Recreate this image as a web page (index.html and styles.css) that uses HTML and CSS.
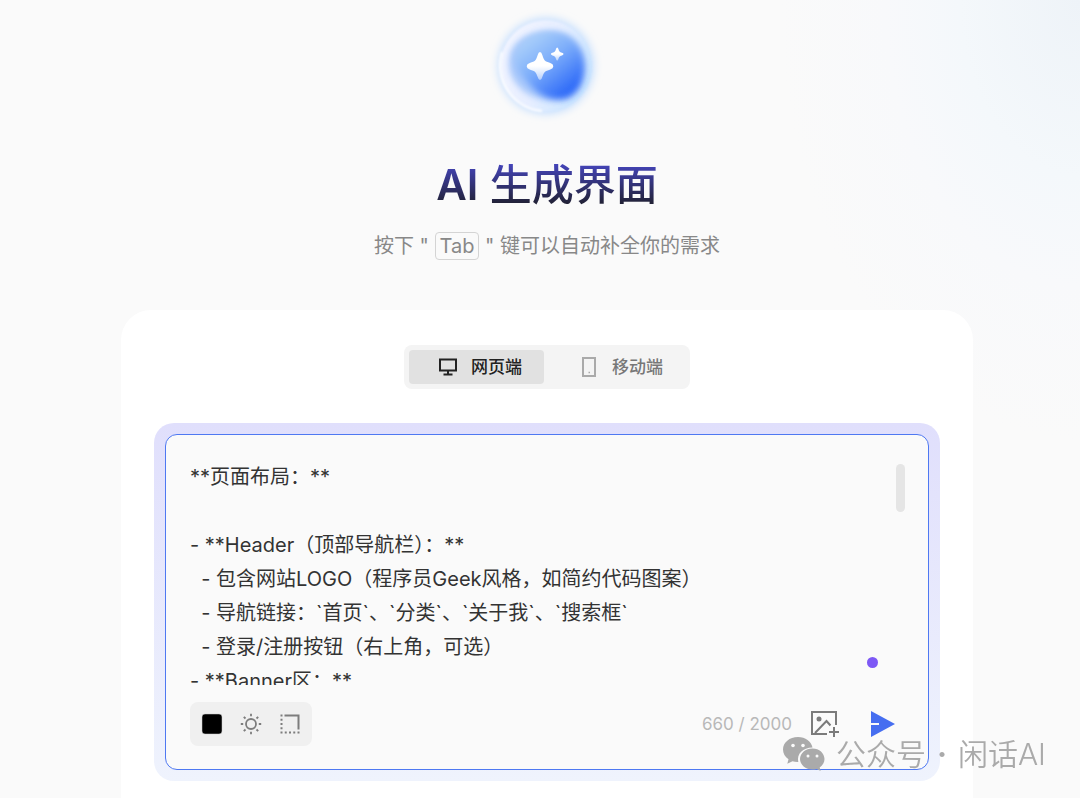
FILE: index.html
```html
<!DOCTYPE html>
<html lang="zh-CN">
<head>
    <meta charset="UTF-8">
    <meta name="viewport" content="width=device-width, initial-scale=1.0">
    <title>AI 生成界面</title>
    <link rel="stylesheet" href="styles.css">
</head>
<body>

<main class="page">
    <header class="hero">
        <svg class="orb" width="130" height="130" viewBox="0 0 130 130" aria-hidden="true">
            <defs>
                <linearGradient id="shell" x1="0" y1="0.3" x2="1" y2="0.7">
                    <stop offset="0" stop-color="#f3f5ff"/>
                    <stop offset="0.5" stop-color="#e6eeff"/>
                    <stop offset="1" stop-color="#c5e3ff"/>
                </linearGradient>
                <linearGradient id="core" x1="0.15" y1="0.15" x2="0.75" y2="0.9">
                    <stop offset="0" stop-color="#a8cefa"/>
                    <stop offset="0.45" stop-color="#7cadfa"/>
                    <stop offset="1" stop-color="#2f6bf8"/>
                </linearGradient>
                <linearGradient id="star" x1="0" y1="0" x2="0" y2="1">
                    <stop offset="0.5" stop-color="#fff"/>
                    <stop offset="1" stop-color="#fff" stop-opacity="0.5"/>
                </linearGradient>
                <filter id="glow" x="-30%" y="-30%" width="160%" height="160%">
                    <feGaussianBlur stdDeviation="4"/>
                </filter>
                <filter id="soft" x="-30%" y="-30%" width="160%" height="160%">
                    <feGaussianBlur stdDeviation="3"/>
                </filter>
                <filter id="edge" x="-30%" y="-30%" width="160%" height="160%">
                    <feGaussianBlur stdDeviation="1"/>
                </filter>
            </defs>
            <circle cx="66" cy="66" r="48" fill="#c4defe" filter="url(#glow)"/>
            <circle cx="66" cy="66" r="46" fill="url(#shell)" filter="url(#edge)"/>
            <path d="M22 52a46 46 0 0 0 40 59" fill="none" stroke="#fff" stroke-width="2" filter="url(#edge)"/>
            <path d="M29 60C30 42 48 31 70 31C90 31 105 46 105 66C105 86 94 101 78 101C64 101 50 98 40 88C32 80 28 71 29 60Z" fill="#a8c8fb" filter="url(#soft)"/>
            <path d="M36 54C40 40 54 32 70 32C89 32 104 46 104 66C104 86 94 99 79 99C68 99 59 95 50 85C42 76 33 67 36 54Z" fill="url(#core)" filter="url(#soft)"/>
            <path d="M60 52q1.500 0 2.300 3c1.700 5.500 2.400 6.200 8 8q3 1 3 3.200t-3 3.200c-5.600 1.800-6.300 2.500-8 7.600q-.8 3-2.300 3t-2.300-3c-1.700-5.100-2.400-5.800-8-7.600q-3-1-3-3.200t3-3.200c5.600-1.800 6.300-2.500 8-8q.8-3 2.300-3z" fill="url(#star)"/>
            <path d="M77.200 47.500q.8 0 1.200 1.500c.7 2.500 1.100 2.900 3.600 3.700q1.500.5 1.500 1.400t-1.500 1.400c-2.500.8-2.900 1.200-3.600 3.500q-.4 1.500-1.200 1.500t-1.200-1.500c-.7-2.300-1.100-2.700-3.600-3.500q-1.500-.5-1.500-1.400t1.500-1.400c2.500-.8 2.900-1.200 3.600-3.700q.4-1.500 1.200-1.500z" fill="url(#star)"/>
        </svg>
        <h1><b>AI</b> 生成界面</h1>
        <p class="hint">按下 " <kbd>Tab</kbd> " 键可以自动补全你的需求</p>
    </header>

    <section class="card">
        <div class="tabs">
            <button type="button" class="tab active">
                <svg width="18" height="18" viewBox="0 0 18 18" fill="none" stroke="currentColor" stroke-width="2">
                    <path d="M1 1.500h16v11H1zM9 12.500v4M4.500 16.500h9"/>
                </svg>
                <span>网页端</span>
            </button>
            <button type="button" class="tab">
                <svg width="18" height="20" viewBox="0 0 18 20" fill="none" stroke="#aaa" stroke-width="2">
                    <path d="M3 1h12v18H3z"/>
                    <path d="M8.500 15.500h1.500" stroke-width="1.500"/>
                </svg>
                <span>移动端</span>
            </button>
        </div>

        <div class="editor-ring">
            <form class="editor">
                <textarea class="prompt" aria-label="需求" spellcheck="false">
**页面布局：**

- **Header（顶部导航栏）：**
  - 包含网站LOGO（程序员Geek风格，如简约代码图案）
  - 导航链接：`首页`、`分类`、`关于我`、`搜索框`
  - 登录/注册按钮（右上角，可选）
- **Banner区：**</textarea>
                <span class="scroll-thumb"></span>
                <span class="dot"></span>

                <div class="toolbar">
                    <div class="style-tools">
                        <button type="button" class="icon-button" aria-label="颜色">
                            <svg width="22" height="22" viewBox="0 0 22 22">
                                <rect x="1" y="1" width="20" height="20" rx="3" fill="#000" stroke="#ccc" stroke-width="0.500"/>
                            </svg>
                        </button>
                        <button type="button" class="icon-button" aria-label="亮度">
                            <svg width="22" height="22" viewBox="0 0 22 22" fill="none" stroke="#7d7d7d" stroke-width="1.800">
                                <circle cx="11" cy="11" r="5"/>
                                <path d="M11 .8v2.400M11 18.800v2.400M.8 11h2.400M18.800 11h2.400M3.800 3.800l1.700 1.700M16.500 16.500l1.700 1.700M18.200 3.800l-1.700 1.700M5.500 16.500l-1.700 1.700"/>
                            </svg>
                        </button>
                        <button type="button" class="icon-button" aria-label="圆角">
                            <svg width="22" height="22" viewBox="0 0 22 22" fill="none" stroke="#7d7d7d" stroke-width="2">
                                <path d="M5.500 2.500h14v14"/>
                                <path d="M2.500 1.500v17M1.500 19.500h19" stroke-dasharray="2 2.250"/>
                            </svg>
                        </button>
                    </div>

                    <div class="actions">
                        <span class="counter">660 / 2000</span>
                        <button type="button" class="icon-button" aria-label="添加图片">
                            <svg width="30" height="28" viewBox="0 0 30 28" fill="none" stroke="#7b7b7b" stroke-width="2">
                                <path d="M17 24H2V2h24v13"/>
                                <circle cx="9" cy="9" r="2.500" fill="#7b7b7b" stroke="none"/>
                                <path d="M5 23L16.500 11l4 4.500M24 17v10M19 22h10"/>
                            </svg>
                        </button>
                        <button type="submit" class="icon-button send" aria-label="发送">
                            <svg width="26" height="28" viewBox="0 0 26 28" fill="#466ef0">
                                <path d="M1 1l24 13L1 27V15h8v-2H1z"/>
                            </svg>
                        </button>
                    </div>
                </div>
            </form>
        </div>
    </section>
</main>

<div class="watermark">
    <svg width="42" height="34" viewBox="0 0 42 34" fill="#aaa">
        <path d="M15 0C6.500 0 0 5.500 0 12.500c0 4 2 7.300 5.500 9.700L4.300 26.800l5.200-2.600c1.800.5 3.500.8 5.800.7C13.500 17 20 10.500 29.500 10.500C28.200 4.500 22.500 0 15 0z"/>
        <path d="M29.500 11.500c-7 0-12.500 4.700-12.500 10.500s5.500 10.500 12.500 10.500c1.500 0 2.900-.2 4.200-.6l4 2.100-1-3.500c2.900-2 4.800-5 4.800-8.500c0-5.800-5.200-10.500-12-10.500z"/>
        <g fill="#fafafa">
            <circle cx="10" cy="8.500" r="1.800"/>
            <circle cx="20" cy="8.500" r="1.800"/>
            <circle cx="25" cy="19" r="1.500"/>
            <circle cx="34" cy="19" r="1.500"/>
        </g>
    </svg>
    <span>公众号</span>
    <b>·</b>
    <span>闲话AI</span>
</div>

</body>
</html>
```
FILE: styles.css
```css
* {
    margin: 0;
    padding: 0;
    box-sizing: border-box;
}

body {
    font-family: Inter, "Noto Sans CJK SC", sans-serif;
    min-height: 100vh;
    background-color: #fafafa;
    background-image: radial-gradient(ellipse 300px 440px at 100% 0, #eef3f8, #f4f8fb 40%, #f8f9fb 65%, #fafafa);
    overflow: hidden;
}

button {
    font-family: inherit;
    border: none;
    background: none;
    cursor: pointer;
}

svg {
    display: block;
    flex: none;
}

/* Page column */
.page {
    padding: 0 107px 0 121px;
}

.hero {
    display: flex;
    flex-direction: column;
    align-items: center;
}

.orb {
    margin-right: 4px;
}

h1 {
    margin-top: 25px;
    font-size: 42px;
    line-height: 60px;
    font-weight: 500;
    background: linear-gradient(#4747c4 10%, #222238 80%);
    background-clip: text;
    -webkit-background-clip: text;
    color: transparent;
}

h1 b {
    font-weight: 600;
}

.hint {
    margin-top: 13px;
    font-size: 20px;
    line-height: 36px;
    color: #888;
}

kbd {
    font-family: inherit;
    padding: 1px 4px;
    border: 1px solid #d4d4d4;
    border-radius: 4px;
}

/* Card */
.card {
    margin-top: 46px;
    padding: 35px 33px;
    border-radius: 30px 30px 0 0;
    background-color: #fff;
}

.tabs {
    display: flex;
    gap: 6px;
    width: max-content;
    margin: 0 auto 34px;
    padding: 5px;
    border-radius: 8px;
    background-color: #f4f4f4;
}

.tab {
    display: flex;
    align-items: center;
    justify-content: center;
    gap: 14px;
    width: 135px;
    height: 34px;
    padding-left: 8px;
    border-radius: 4px;
    font-size: 17px;
    font-weight: 500;
    color: #777;
}

.tab span {
    padding-bottom: 3px;
}

.tab.active {
    background-color: #e1e1e1;
    color: #222;
}

/* Editor */
.editor-ring {
    padding: 11px;
    border-radius: 20px;
    background: linear-gradient(#e0dffc, #eff3fd);
}

.editor {
    position: relative;
    padding: 25px 22px 23px 24px;
    border: 1px solid #4e78f2;
    border-radius: 12px;
    background-color: #fafafa;
}

.prompt {
    display: block;
    width: 100%;
    height: 225px;
    border: none;
    outline: none;
    resize: none;
    overflow: hidden;
    background: transparent;
    font-family: inherit;
    font-size: 20px;
    line-height: 34px;
    color: #333;
}

.scroll-thumb {
    position: absolute;
    top: 29px;
    right: 23px;
    width: 9px;
    height: 48px;
    border-radius: 5px;
    background-color: #e5e5e5;
}

.dot {
    position: absolute;
    right: 50px;
    bottom: 101px;
    width: 11px;
    height: 11px;
    border-radius: 50%;
    background-color: #7d58f5;
}

.toolbar {
    display: flex;
    align-items: center;
    justify-content: space-between;
    margin-top: 17px;
}

.style-tools {
    display: flex;
    gap: 17px;
    padding: 11px;
    border-radius: 8px;
    background-color: #f0f0f0;
}

.actions {
    display: flex;
    align-items: center;
    gap: 18px;
    padding-right: 10px;
}

.counter {
    font-size: 17px;
    color: #b8b8b8;
}

.send {
    margin-left: 12px;
}

/* Watermark */
.watermark {
    position: fixed;
    right: 34px;
    bottom: 22px;
    display: flex;
    align-items: center;
    gap: 11px;
    font-size: 30px;
    line-height: 44px;
    font-weight: 350;
    color: #aaa;
}
```
